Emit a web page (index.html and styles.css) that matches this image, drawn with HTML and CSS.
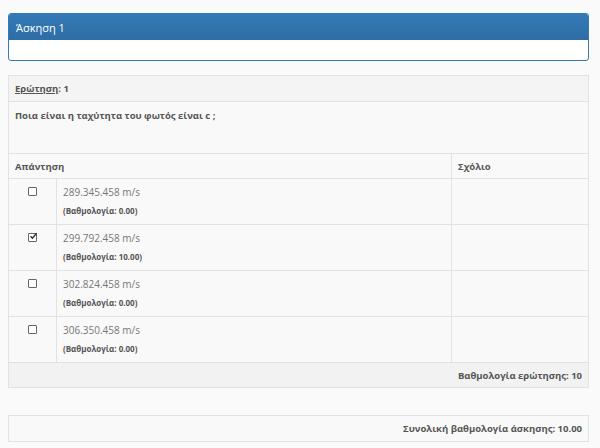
FILE: index.html
```html
<!DOCTYPE html>
<html>
<head>
<meta charset="utf-8">
<link rel="stylesheet" href="styles.css">
</head>
<body>
<div class="panel">
  <div class="panel-heading">Άσκηση 1</div>
  <div class="panel-body"></div>
</div>
<table class="qtable">
  <tr class="qnum"><td colspan="3"><u>Ερώτηση</u>: 1</td></tr>
  <tr class="qtext"><td colspan="3">Ποια είναι η ταχύτητα του φωτός είναι c ;</td></tr>
  <tr class="head"><td colspan="2">Απάντηση</td><td class="comment">Σχόλιο</td></tr>
  <tr class="ans">
    <td class="chk"><span class="box"></span></td>
    <td class="atext"><div class="val">289.345.458 m/s</div><div class="score">(Βαθμολογία: 0.00)</div></td>
    <td></td>
  </tr>
  <tr class="ans">
    <td class="chk"><span class="box checked"><svg viewBox="0 0 10 10" width="10" height="10"><path d="M2.5 5.2 L4.4 7.1 L8.6 2.2" fill="none" stroke="#333" stroke-width="1.4"/></svg></span></td>
    <td class="atext"><div class="val">299.792.458 m/s</div><div class="score">(Βαθμολογία: 10.00)</div></td>
    <td></td>
  </tr>
  <tr class="ans">
    <td class="chk"><span class="box"></span></td>
    <td class="atext"><div class="val">302.824.458 m/s</div><div class="score">(Βαθμολογία: 0.00)</div></td>
    <td></td>
  </tr>
  <tr class="ans">
    <td class="chk"><span class="box"></span></td>
    <td class="atext"><div class="val">306.350.458 m/s</div><div class="score">(Βαθμολογία: 0.00)</div></td>
    <td></td>
  </tr>
  <tr class="foot"><td colspan="3">Βαθμολογία ερώτησης: 10</td></tr>
</table>
<div class="total">Συνολική βαθμολογία άσκησης: 10.00</div>
</body>
</html>
```
FILE: styles.css
```css
html, body {
  margin: 0;
  padding: 0;
  background: #fafafa;
}
body {
  padding: 13px 11px 0 8px;
  font-family: "Open Sans", "Liberation Sans", sans-serif;
  font-size: 10px;
  color: #555;
}
.panel {
  border: 1px solid #337ab7;
  border-radius: 3px;
  background: #fff;
  overflow: hidden;
}
.panel-heading {
  height: 26px;
  box-sizing: border-box;
  padding: 6px 7px 0;
  color: #fff;
  font-size: 11px;
  background: linear-gradient(#337ab7, #2e6da4);
}
.panel-body {
  height: 20px;
}
.qtable {
  width: 100%;
  margin-top: 14px;
  border-collapse: collapse;
  background: #f9f9f9;
  border: 1px solid #e2e2e2;
}
.qtable td {
  border: 1px solid #e2e2e2;
  padding: 0 6px;
  vertical-align: middle;
  box-sizing: border-box;
}
.qnum td {
  height: 26px;
  background: #f4f4f4;
  font-weight: bold;
  font-size: 9.5px;
}
.qtext td {
  height: 52px;
  vertical-align: top;
  padding-top: 7px;
  font-weight: bold;
  font-size: 9.5px;
}
.head td {
  height: 25px;
  font-weight: bold;
  font-size: 9.5px;
}
.head .comment {
  width: 137px;
}
.ans td {
  height: 46px;
  vertical-align: top;
  padding-top: 5px;
}
.qtable .chk {
  width: 48px;
  text-align: center;
}
.box {
  display: inline-block;
  width: 7px;
  height: 7px;
  border: 1px solid #666;
  border-radius: 1px;
  background: #fff;
  position: relative;
  margin-top: 3px;
}
.box svg {
  position: absolute;
  left: -1px;
  top: -3px;
}
.val {
  color: #777;
  font-size: 10px;
  line-height: 16px;
}
.score {
  margin-top: 5px;
  font-size: 8px;
  font-weight: bold;
  color: #555;
  line-height: 12px;
}
.foot td {
  height: 25px;
  background: #f2f2f2;
  text-align: right;
  font-weight: bold;
  font-size: 9.5px;
  padding-right: 6px;
}
.total {
  margin-top: 27px;
  height: 25px;
  border: 1px solid #e2e2e2;
  background: #f9f9f9;
  text-align: right;
  font-weight: bold;
  font-size: 9.5px;
  padding-right: 6px;
  line-height: 25px;
}
```
